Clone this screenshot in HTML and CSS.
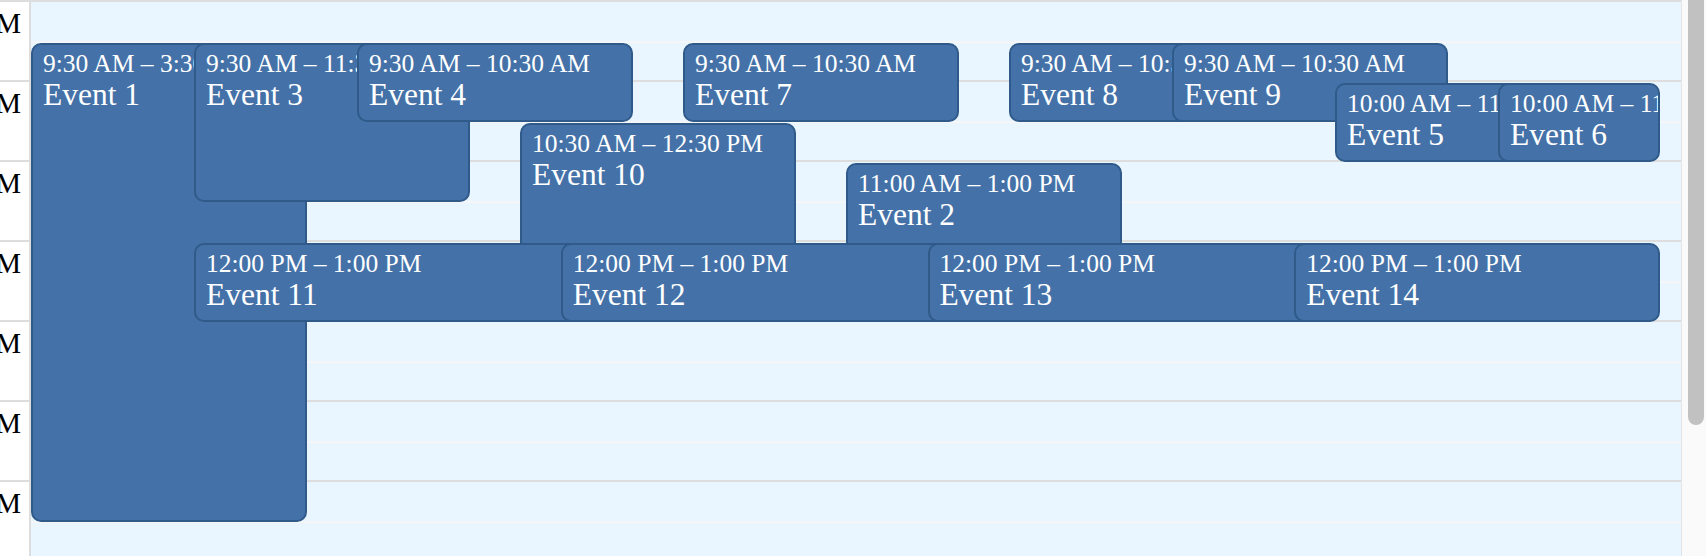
FILE: index.html
```html
<!DOCTYPE html>
<html lang="en">
<head>
    <meta charset="UTF-8">
    <meta name="viewport" content="width=device-width, initial-scale=1.0">
    <title>Day View</title>
    <link rel="stylesheet" href="styles.css">
</head>
<body>

<div class="calendar">
    <div class="gutter" id="gutter">
        <!-- Hour labels will be listed here -->
    </div>

    <div class="day-column">
        <div id="slots"></div>
        <div class="events" id="events">
            <!-- Events will be listed here -->
        </div>
    </div>

    <div class="scrollbar">
        <div class="thumb"></div>
    </div>
</div>

<script>
    const firstHour = 9;     // top of the visible area
    const hourHeight = 80;   // px per hour
    const hourCount = 7;

    // left / width are percentages of the day column (overlap layout)
    const events = [
        { title: 'Event 1',  start: 9.5,  end: 15.5, left: 0,    width: 17 },
        { title: 'Event 3',  start: 9.5,  end: 11.5, left: 10,   width: 17 },
        { title: 'Event 4',  start: 9.5,  end: 10.5, left: 20,   width: 17 },
        { title: 'Event 7',  start: 9.5,  end: 10.5, left: 40,   width: 17 },
        { title: 'Event 8',  start: 9.5,  end: 10.5, left: 60,   width: 17 },
        { title: 'Event 9',  start: 9.5,  end: 10.5, left: 70,   width: 17 },
        { title: 'Event 5',  start: 10,   end: 11,   left: 80,   width: 17 },
        { title: 'Event 6',  start: 10,   end: 11,   left: 90,   width: 10 },
        { title: 'Event 10', start: 10.5, end: 12.5, left: 30,   width: 17 },
        { title: 'Event 2',  start: 11,   end: 13,   left: 50,   width: 17 },
        { title: 'Event 11', start: 12,   end: 13,   left: 10,   width: 38.25 },
        { title: 'Event 12', start: 12,   end: 13,   left: 32.5, width: 38.25 },
        { title: 'Event 13', start: 12,   end: 13,   left: 55,   width: 38.25 },
        { title: 'Event 14', start: 12,   end: 13,   left: 77.5, width: 22.5 }
    ];

    // 9.5 -> "9:30 AM"
    function formatTime(value) {
        const hours = Math.floor(value);
        const minutes = Math.round((value - hours) * 60);
        const suffix = hours >= 12 ? 'PM' : 'AM';
        const h12 = hours % 12 || 12;
        return `${h12}:${String(minutes).padStart(2, '0')} ${suffix}`;
    }

    function renderGrid() {
        const gutter = document.getElementById('gutter');
        const slots = document.getElementById('slots');

        for (let i = 0; i < hourCount; i++) {
            const label = document.createElement('div');
            label.className = 'gutter-group';
            label.innerHTML = `<span class="gutter-label">${formatTime(firstHour + i)}</span>`;
            gutter.appendChild(label);

            const group = document.createElement('div');
            group.className = 'slot-group';
            group.innerHTML = '<div class="slot"></div><div class="slot"></div>';
            slots.appendChild(group);
        }
    }

    function renderEvents() {
        const container = document.getElementById('events');
        container.innerHTML = '';

        events.forEach(ev => {
            const top = (ev.start - firstHour) * hourHeight + 1;
            const height = (ev.end - ev.start) * hourHeight - 1;

            const el = document.createElement('div');
            el.className = 'event';
            el.style.top = top + 'px';
            el.style.height = height + 'px';
            el.style.left = ev.left + '%';
            el.style.width = `calc(${ev.width}% - 1.5px)`;
            el.innerHTML = `
                <div class="event-label">${formatTime(ev.start)} – ${formatTime(ev.end)}</div>
                <div class="event-title">${ev.title}</div>
            `;
            container.appendChild(el);
        });
    }

    renderGrid();
    renderEvents();
</script>

</body>
</html>
```

FILE: styles.css
```css
body {
    margin: 0;
    font-family: "Liberation Serif", "Times New Roman", serif;
    background-color: #fff;
}
.calendar {
    display: flex;
    height: 556px;
    overflow: hidden;
}
.gutter {
    width: 29px;
    flex: none;
    border-top: 2px solid #ddd;
    border-right: 2px solid #ddd;
    background-color: #fff;
}
.gutter-group {
    height: 80px;
    box-sizing: border-box;
    border-bottom: 2px solid #ddd;
    display: flex;
    justify-content: flex-end;
    padding: 5px 8px 0 0;
}
.gutter-label {
    font-size: 29px;
    white-space: nowrap;
    color: #000;
}
.day-column {
    flex: 1;
    position: relative;
    background-color: #eaf6ff;
    border-top: 2px solid #ddd;
}
.slot-group {
    height: 80px;
    box-sizing: border-box;
    border-bottom: 2px solid #ddd;
}
.slot {
    height: 39px;
}
.slot + .slot {
    height: 37px;
    border-top: 2px solid #f5f6f7;
}
.events {
    position: absolute;
    top: 0;
    left: 0;
    right: 20px;
    bottom: 0;
}
.event {
    position: absolute;
    box-sizing: border-box;
    background-color: #4472a8;
    border: 2px solid #2f5a8a;
    border-radius: 10px;
    color: #fff;
    padding: 4px 10px;
    overflow: hidden;
}
.event-label {
    font-size: 25.5px;
    white-space: nowrap;
}
.event-title {
    font-size: 31.5px;
    line-height: 1;
}
.scrollbar {
    width: 25px;
    flex: none;
    box-sizing: border-box;
    background-color: #fafafa;
    border-left: 1px solid #e4e4e4;
    padding-left: 6px;
}
.thumb {
    width: 16px;
    height: 441px;
    margin-top: -16px;
    border-radius: 8px;
    background-color: #c1c1c1;
}
```
